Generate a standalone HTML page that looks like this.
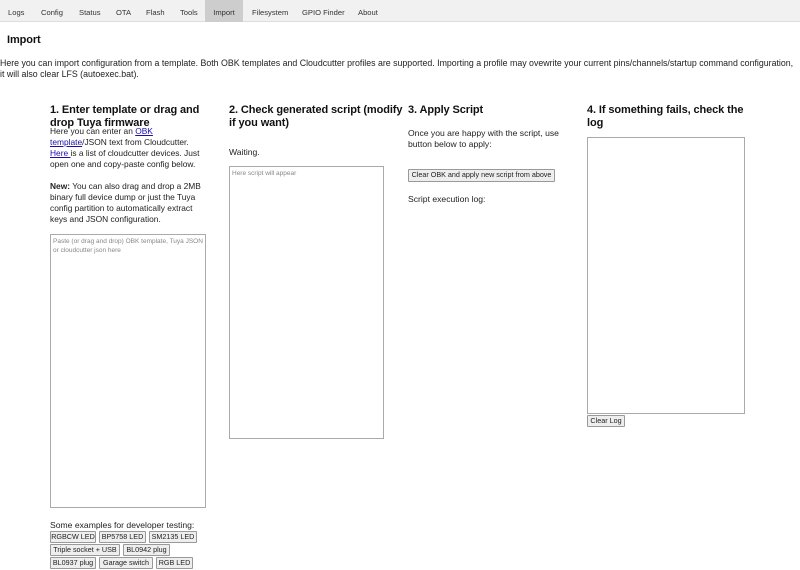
<!DOCTYPE html>
<html><head><meta charset="utf-8"><style>
*{box-sizing:border-box;margin:0;padding:0}
body{width:800px;height:570px;overflow:hidden;background:#fff;font-family:"Liberation Sans",sans-serif;font-size:8.6px;color:#222;position:relative}
.a{position:absolute}
#tabs{left:0;top:0;width:800px;height:22px;background:#f1f1f1;border-bottom:1px solid #ddd}
#tabs span{position:absolute;top:0;height:22px;line-height:25px;font-size:7.6px;color:#333}
h3{position:absolute;font-size:11px;font-weight:bold;color:#111;line-height:13px;letter-spacing:-0.1px}
p{position:absolute;line-height:11px}
a{color:#1a0dab;text-decoration:underline}
.ta{position:absolute;border:1px solid #aaa;background:#fff;font-size:6.5px;color:#888;padding:2px;line-height:9px}
.btn{position:absolute;border:1px solid #999;background:#eee;font-size:7.2px;height:12px;line-height:10px;text-align:center;color:#222;border-radius:1px}
</style></head><body>
<div id="tabs" class="a">
<span style="left:8px">Logs</span><span style="left:41px">Config</span><span style="left:79px">Status</span><span style="left:116px">OTA</span><span style="left:146px">Flash</span><span style="left:180px">Tools</span>
<span style="left:205px;width:38px;background:#cdcdcd;text-align:center">Import</span>
<span style="left:252px">Filesystem</span><span style="left:302px">GPIO Finder</span><span style="left:358px">About</span>
</div>
<h3 style="left:7px;top:34px">Import</h3>
<p style="left:0;top:58px;width:798px;font-size:8.8px">Here you can import configuration from a template. Both OBK templates and Cloudcutter profiles are supported. Importing a profile may ovewrite your current pins/channels/startup command configuration, it will also clear LFS (autoexec.bat).</p>

<h3 style="left:50px;top:104px;width:160px">1. Enter template or drag and drop Tuya firmware</h3>
<p style="left:50px;top:126px;width:158px;font-size:8.4px">Here you can enter an <a>OBK</a><br><a>template</a>/JSON text from Cloudcutter.<br><a>Here </a>is a list of cloudcutter devices. Just<br>open one and copy-paste config below.</p>
<p style="left:50px;top:181px;width:158px;font-size:8.4px"><b>New:</b> You can also drag and drop a 2MB<br>binary full device dump or just the Tuya<br>config partition to automatically extract<br>keys and JSON configuration.</p>
<div class="ta" style="left:50px;top:234px;width:156px;height:274px">Paste (or drag and drop) OBK template, Tuya JSON or cloudcutter json here</div>
<p style="left:50px;top:520px">Some examples for developer testing:</p>
<div class="btn" style="left:50px;top:531px;width:46px">RGBCW LED</div>
<div class="btn" style="left:99px;top:531px;width:47px">BP5758 LED</div>
<div class="btn" style="left:149px;top:531px;width:48px">SM2135 LED</div>
<div class="btn" style="left:50px;top:544px;width:70px">Triple socket + USB</div>
<div class="btn" style="left:123px;top:544px;width:47px">BL0942 plug</div>
<div class="btn" style="left:50px;top:557px;width:46px">BL0937 plug</div>
<div class="btn" style="left:99px;top:557px;width:54px">Garage switch</div>
<div class="btn" style="left:156px;top:557px;width:37px">RGB LED</div>

<h3 style="left:229px;top:104px;width:175px">2. Check generated script (modify if you want)</h3>
<p style="left:229px;top:147px">Waiting.</p>
<div class="ta" style="left:229px;top:166px;width:155px;height:273px">Here script will appear</div>

<h3 style="left:408px;top:104px">3. Apply Script</h3>
<p style="left:408px;top:128px;width:155px">Once you are happy with the script, use button below to apply:</p>
<div class="btn" style="left:408px;top:169px;height:13px;width:147px">Clear OBK and apply new script from above</div>
<p style="left:408px;top:194px">Script execution log:</p>

<h3 style="left:587px;top:104px;width:165px">4. If something fails, check the log</h3>
<div class="ta" style="left:587px;top:137px;width:158px;height:277px"></div>
<div class="btn" style="left:587px;top:415px;width:38px">Clear Log</div>
</body></html>
